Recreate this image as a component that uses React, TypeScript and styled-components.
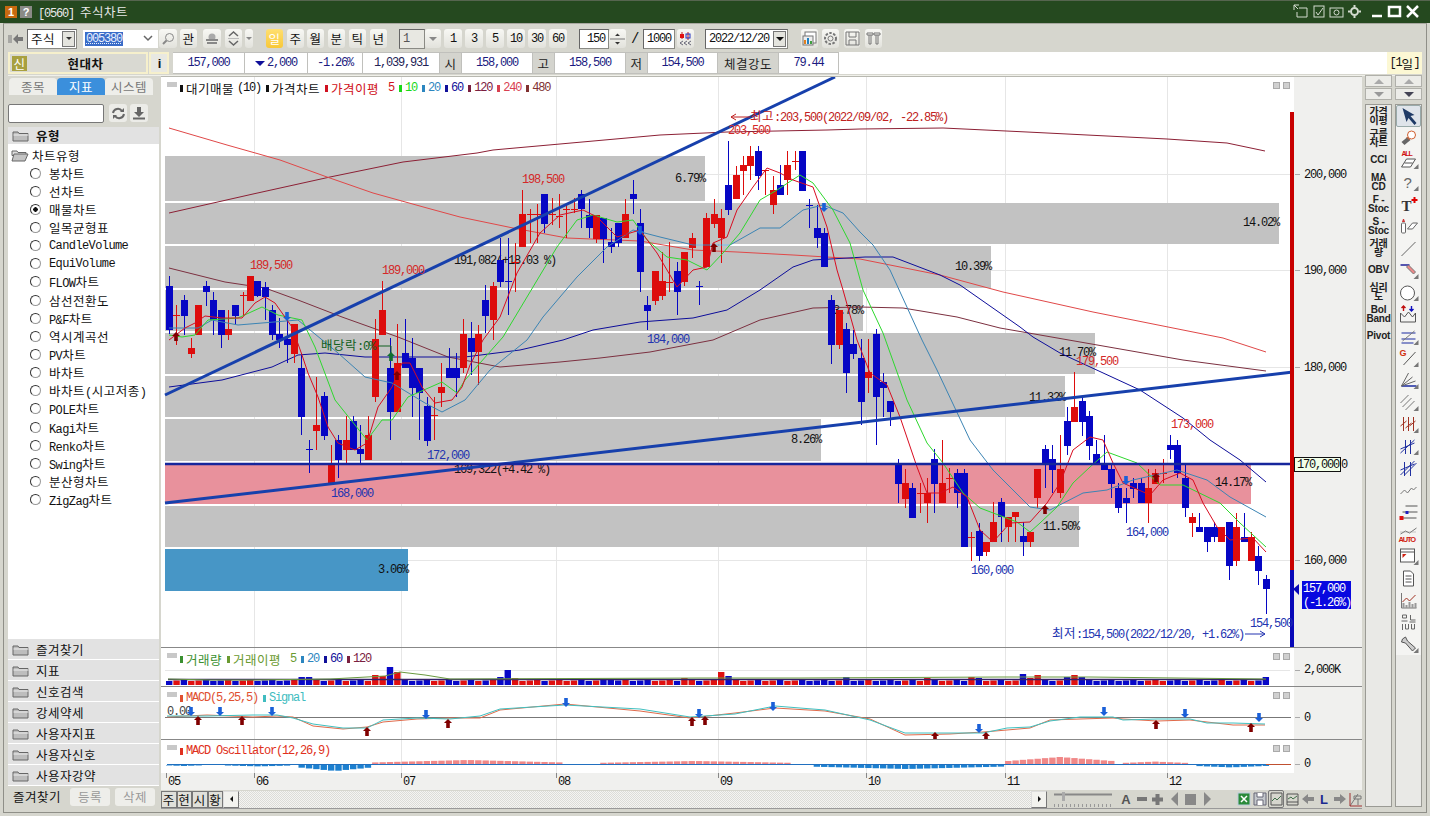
import React from 'react'
import styled, { createGlobalStyle } from 'styled-components'

const GlobalStyle = createGlobalStyle`
  html, body { margin: 0; padding: 0; width: 1430px; height: 816px; overflow: hidden; background: #d6d6ce; }
  * { box-sizing: border-box; }
`

// candles: [colour, body top, body bottom, wick top, wick bottom] in page pixels
type Candle = [string, number, number, number, number]
const candles: Candle[] = [
  ['b', 286, 330, 276, 334], ['r', 315, 315, 305, 345], ['b', 300, 316, 295, 335], ['r', 348, 354, 338, 358],
  ['r', 305, 335, 305, 335], ['b', 286, 292, 281, 306], ['b', 300, 320, 292, 335], ['b', 310, 335, 310, 348],
  ['r', 329, 335, 310, 340], ['b', 305, 316, 305, 325], ['r', 295, 295, 292, 316], ['r', 276, 301, 276, 301],
  ['b', 281, 296, 281, 297], ['b', 287, 297, 282, 320], ['b', 310, 335, 305, 340], ['b', 334, 340, 318, 348],
  ['b', 339, 345, 312, 363], ['r', 324, 354, 324, 363], ['b', 368, 417, 355, 435], ['b', 449, 449, 440, 473],
  ['r', 425, 431, 377, 450], ['b', 396, 436, 392, 440], ['r', 464, 483, 445, 483], ['b', 440, 460, 435, 478],
  ['r', 440, 450, 416, 463], ['b', 421, 450, 416, 450], ['b', 449, 454, 425, 463], ['r', 435, 460, 416, 460],
  ['r', 339, 397, 319, 402], ['r', 310, 335, 281, 335], ['b', 368, 412, 338, 440], ['r', 363, 412, 324, 412],
  ['b', 353, 368, 319, 368], ['b', 358, 388, 338, 417], ['b', 368, 393, 368, 440], ['b', 406, 441, 397, 446],
  ['r', 415, 415, 397, 440], ['r', 387, 393, 363, 407], ['b', 368, 378, 348, 378], ['b', 368, 378, 353, 397],
  ['r', 334, 368, 319, 373], ['b', 338, 352, 322, 375], ['r', 334, 352, 325, 385], ['b', 300, 316, 285, 333],
  ['r', 286, 320, 282, 340], ['b', 260, 282, 238, 287], ['b', 281, 281, 238, 315], ['r', 262, 262, 243, 292],
  ['r', 214, 247, 190, 247], ['r', 214, 214, 209, 243], ['r', 214, 214, 204, 243], ['b', 194, 224, 194, 233],
  ['r', 214, 214, 198, 225], ['r', 216, 216, 194, 228], ['r', 209, 209, 204, 238], ['r', 209, 209, 198, 213],
  ['b', 194, 209, 190, 228], ['b', 215, 228, 199, 238], ['r', 215, 239, 215, 243], ['b', 218, 239, 218, 263],
  ['b', 242, 247, 228, 253], ['b', 223, 243, 223, 247], ['r', 214, 238, 199, 238], ['b', 194, 199, 180, 214],
  ['b', 223, 272, 209, 292], ['b', 305, 311, 296, 330], ['r', 271, 301, 271, 305], ['r', 281, 296, 252, 300],
  ['r', 282, 282, 242, 292], ['b', 271, 292, 262, 315], ['r', 252, 282, 252, 286], ['r', 238, 248, 233, 258],
  ['b', 286, 286, 281, 305], ['r', 218, 267, 213, 267], ['r', 214, 224, 199, 228], ['r', 218, 238, 209, 263],
  ['b', 185, 210, 141, 215], ['r', 175, 199, 166, 199], ['r', 165, 171, 156, 195], ['r', 156, 166, 146, 180],
  ['b', 151, 176, 146, 190], ['r', 170, 170, 170, 195], ['r', 190, 205, 176, 214], ['b', 185, 195, 165, 195],
  ['r', 165, 180, 151, 195], ['r', 161, 161, 151, 170], ['b', 151, 191, 151, 191], ['b', 205, 205, 199, 228],
  ['b', 228, 238, 205, 248], ['b', 233, 267, 228, 267], ['b', 300, 345, 295, 364], ['r', 310, 345, 310, 349],
  ['b', 329, 373, 323, 393], ['b', 344, 354, 330, 359], ['b', 358, 402, 339, 425], ['r', 372, 378, 339, 393],
  ['b', 334, 397, 329, 445], ['b', 382, 388, 373, 417], ['b', 401, 412, 401, 426], ['b', 464, 484, 459, 503],
  ['r', 483, 499, 469, 508], ['b', 488, 518, 483, 518], ['r', 493, 493, 483, 513], ['r', 493, 503, 478, 523],
  ['b', 459, 484, 449, 513], ['r', 483, 503, 440, 503], ['r', 478, 478, 468, 493], ['b', 473, 493, 469, 508],
  ['b', 473, 547, 469, 547], ['r', 537, 537, 532, 561], ['b', 531, 556, 523, 561], ['r', 542, 552, 542, 556],
  ['r', 522, 542, 502, 542], ['b', 502, 517, 498, 542], ['r', 517, 527, 517, 542], ['r', 512, 517, 512, 542],
  ['b', 536, 542, 522, 556], ['r', 532, 542, 532, 547], ['r', 469, 498, 469, 508], ['b', 449, 463, 445, 488],
  ['b', 459, 470, 445, 493], ['r', 469, 493, 435, 498], ['b', 421, 446, 407, 455], ['r', 407, 422, 372, 422],
  ['b', 401, 422, 397, 436], ['b', 416, 446, 411, 460], ['b', 454, 464, 440, 464], ['b', 464, 470, 435, 470],
  ['b', 469, 484, 464, 498], ['b', 488, 508, 483, 513], ['b', 498, 503, 488, 523], ['b', 483, 489, 478, 498],
  ['b', 483, 503, 478, 503], ['r', 488, 503, 469, 523], ['r', 473, 484, 469, 484], ['r', 473, 473, 459, 483],
  ['b', 445, 450, 435, 459], ['b', 445, 473, 440, 478], ['b', 478, 508, 464, 517], ['r', 517, 523, 513, 537],
  ['b', 527, 532, 513, 532], ['b', 527, 542, 527, 552], ['b', 527, 537, 522, 542], ['r', 527, 542, 527, 542],
  ['b', 522, 566, 522, 580], ['r', 527, 561, 513, 566], ['b', 537, 542, 513, 542], ['r', 537, 561, 532, 561],
  ['b', 556, 571, 546, 585], ['b', 579, 589, 575, 614],
]
const candleX = (i: number) => Math.round(169 + 7.36 * i)

const ma5 = '169,340 185,328 195,323 205,316 222,318 242,318 255,303 265,297 275,303 292,327 302,355 308,373 318,397 328,427 338,443 355,450 367,443 378,407 392,387 402,363 410,363 422,387 435,403 452,400 462,387 470,365 483,340 500,317 517,273 540,233 560,215 583,210 597,217 617,237 640,230 657,253 677,287 693,270 707,267 713,243 727,237 737,210 753,187 767,168 780,173 793,180 813,187 827,227 837,270 843,290 857,340 870,373 887,385 900,417 917,467 927,493 940,493 953,487 967,497 980,530 993,542 1010,523 1030,522 1047,503 1060,483 1073,450 1090,437 1103,440 1113,463 1123,483 1150,495 1163,480 1180,473 1193,480 1203,503 1217,527 1230,540 1253,538 1266,552'
const ma10 = '169,335 182,337 195,335 208,320 238,318 262,307 278,315 302,320 315,347 335,400 367,440 382,420 392,420 408,397 442,382 457,393 465,380 503,337 527,297 557,247 577,220 593,215 617,222 633,220 647,240 667,257 687,260 707,270 723,253 740,233 760,200 777,190 800,175 813,183 833,210 850,243 863,290 883,333 907,400 927,443 943,463 963,493 980,508 1017,522 1030,532 1040,523 1057,507 1073,483 1090,467 1107,452 1137,463 1160,485 1183,485 1220,503 1240,523 1266,547'
const ma20 = '169,328 198,328 212,320 238,325 298,320 338,353 365,377 392,383 425,403 442,412 465,400 490,370 527,340 543,317 577,277 607,247 633,230 660,237 693,245 730,245 760,228 780,228 803,210 823,205 843,213 860,232 873,245 890,270 922,340 937,370 970,440 993,470 1030,507 1050,510 1083,493 1107,490 1133,480 1177,470 1207,480 1230,497 1266,517'
const ma60 = '169,387 222,380 272,367 298,355 325,353 365,357 465,357 520,350 563,340 593,330 640,322 693,318 727,310 760,290 793,267 813,260 865,257 893,257 940,275 960,285 1020,327 1033,337 1060,353 1075,360 1140,390 1183,418 1210,440 1240,460 1266,482'
const ma120 = '169,268 225,282 265,288 298,300 342,317 398,337 448,357 500,367 560,362 600,358 650,352 713,340 760,320 813,308 860,307 903,308 957,317 1000,328 1063,339 1183,360 1266,371'
const ma240 = '169,128 227,145 280,160 327,177 373,193 427,208 460,217 513,228 567,238 640,241 693,250 737,252 793,255 860,259 940,275 1003,292 1093,312 1223,338 1266,352'
const ma480 = '169,213 253,194 330,177 403,162 477,153 493,150 560,144 660,135 727,132 827,130 860,129 943,128 1027,132 1167,139 1227,143 1265,151'

const zones = [
  { y: 156, h: 45, x2: 705, label: '6.79%', ly: 178 },
  { y: 203, h: 41, x2: 1279, label: '14.02%', ly: 222 },
  { y: 246, h: 42, x2: 991, label: '10.39%', ly: 266 },
  { y: 290, h: 41, x2: 863, label: '3.78%', ly: 310 },
  { y: 333, h: 41, x2: 1095, label: '11.70%', ly: 352 },
  { y: 376, h: 41, x2: 1065, label: '11.32%', ly: 397 },
  { y: 419, h: 42, x2: 821, label: '8.26%', ly: 439 },
  { y: 463, h: 41, x2: 1251, label: '14.17%', ly: 482, fill: '#e8919c' },
  { y: 506, h: 41, x2: 1079, label: '11.50%', ly: 526 },
  { y: 549, h: 42, x2: 408, label: '3.06%', ly: 569, fill: '#4796c6' },
]

const gridX = [254, 401, 556, 718, 866, 1005, 1167]
const gridY = [174, 270, 367, 464, 560]

const volHeights: Record<number, number> = {
  28: 10, 29: 9, 30: 18, 31: 13, 18: 8, 19: 8, 20: 6, 45: 8, 46: 15, 47: 7, 60: 6, 70: 7, 75: 13, 76: 9, 92: 8, 109: 8, 110: 7, 116: 11, 117: 7, 118: 10, 122: 8, 123: 10, 124: 8, 149: 8, 103: 7,
}

const macdPts = [[167, 716], [207, 716], [253, 715], [277, 715], [293, 718], [313, 724], [343, 728], [367, 728], [383, 720], [417, 718], [450, 719], [480, 716], [500, 709], [565, 705], [640, 709], [690, 717], [735, 714], [775, 706], [825, 710], [870, 720], [905, 733], [950, 733], [983, 733], [1007, 728], [1030, 727], [1050, 721], [1080, 717], [1113, 717], [1123, 720], [1157, 719], [1190, 719], [1207, 723], [1233, 723], [1265, 724]]
const toPts = (p: number[][]) => p.map(([x, y]) => `${x},${y}`).join(' ')
const macdLine = macdPts.map(([x, y], i) => [x, y + (i % 3 === 0 ? 1 : i % 3 === 1 ? -1 : 2)])

const oscValue = (i: number) => {
  const x = candleX(i)
  const bump = (a: number, b: number, h: number) => (x >= a && x <= b ? h * (1 - Math.abs((x - (a + b) / 2) / ((b - a) / 2)) * 0.6) : 0)
  return bump(375, 560, 4) + bump(600, 790, 3) + bump(1005, 1115, 7) + bump(1120, 1190, 2.4) - bump(298, 372, 6) - bump(810, 1003, 4) - bump(1195, 1266, 2.4) - bump(167, 200, 1) - bump(228, 290, 1.4)
}

const upArrows = [[198, 721], [242, 721], [367, 732], [448, 724], [692, 722], [705, 721], [935, 737], [986, 737], [1156, 725], [1251, 728]]
const downArrows = [[191, 711], [220, 711], [272, 711], [426, 714], [566, 702], [699, 713], [773, 706], [979, 728], [1104, 711], [1185, 713], [1259, 717]]

const Han = styled.span`
  font-family: 'Noto Sans CJK KR', sans-serif;
  font-size: 12.5px;
  letter-spacing: 0.5px;
`
const HanT = styled.tspan`
  font-family: 'Noto Sans CJK KR', sans-serif;
  font-size: 12.5px;
  letter-spacing: 0.5px;
`
const splitText = (text: string) => text.split(/([\u3131-\uD7A3]+)/).filter(Boolean)
const isHan = (s: string) => /[\u3131-\uD7A3]/.test(s)

const G: React.FC<{ children: string }> = ({ children }) => (
  <>
    {splitText(children).map((s, i) => (isHan(s) ? <Han key={i}>{s}</Han> : <React.Fragment key={i}>{s}</React.Fragment>))}
  </>
)

const ChartText = styled.text`
  font-family: 'Liberation Mono', monospace;
  font-size: 12px;
  letter-spacing: -1.2px;
`
const Label: React.FC<{ x: number; y: number; fill?: string; anchor?: 'start' | 'end'; children: string }> = ({ x, y, fill = '#111', anchor = 'start', children }) => (
  <ChartText x={x} y={y + 4} fill={fill} textAnchor={anchor}>
    {splitText(children).map((s, i) => (isHan(s) ? <HanT key={i}>{s}</HanT> : <tspan key={i}>{s}</tspan>))}
  </ChartText>
)

const UpArrow: React.FC<{ x: number; y: number; fill?: string }> = ({ x, y, fill = '#800000' }) => (
  <path d={`M${x} ${y - 5}l4 4h-2.2v5h-3.6v-5h-2.2z`} fill={fill} />
)
const DownArrow: React.FC<{ x: number; y: number; fill?: string }> = ({ x, y, fill = '#1a5fd8' }) => (
  <path d={`M${x} ${y + 5}l-4 -4h2.2v-5h3.6v5h2.2z`} fill={fill} />
)

const Window = styled.div`
  width: 1430px;
  height: 816px;
  display: flex;
  flex-direction: column;
  font-family: 'Liberation Mono', monospace;
  font-size: 12px;
  letter-spacing: -1.2px;
  color: #111;
  background: #d6d6ce;
`
const TitleBar = styled.div`
  height: 23px;
  flex: none;
  display: flex;
  align-items: center;
  padding: 0 10px 1px 5px;
  background: #25491f;
  border-top: 1px solid #56654f;
  color: #e8e8e8;
`
const TitleBadge = styled.span<{ $bg: string }>`
  width: 12px;
  height: 12px;
  margin-right: 3px;
  background: ${(p) => p.$bg};
  color: #fff;
  font-family: 'Liberation Sans', sans-serif;
  font-size: 11px;
  font-weight: 700;
  letter-spacing: 0;
  line-height: 12px;
  text-align: center;
`
const TitleText = styled.span`
  margin-left: 3px;
  flex: 1;
`
const TitleIcons = styled.div`
  display: flex;
  align-items: center;
  gap: 3px;
`
const TitleSpacer = styled.span`
  width: 1px;
`
const Frame = styled.div`
  flex: 1;
  margin: 0 3px 3px;
  padding: 0 4px;
  border: 1px solid #8f8f88;
  border-top: 1px solid #a8a8a0;
  display: flex;
  flex-direction: column;
  min-height: 0;
`
const Toolbar = styled.div`
  height: 27px;
  flex: none;
  display: flex;
  align-items: center;
  padding-top: 2px;
`
const Btn = styled.div<{ $w: number; $ml?: number; $active?: boolean; $flat?: boolean }>`
  width: ${(p) => p.$w}px;
  height: 19px;
  margin-left: ${(p) => p.$ml || 0}px;
  flex: none;
  display: flex;
  align-items: center;
  justify-content: center;
  border-radius: 3px;
  background: ${(p) => (p.$flat ? 'none' : p.$active ? 'linear-gradient(#ffdf70, #f8c838)' : 'linear-gradient(#f8f8f4, #e2e2dc)')};
  color: ${(p) => (p.$active ? '#fff' : '#111')};
`
const Field = styled.div<{ $w: number; $ml?: number; $end?: boolean; $off?: boolean }>`
  width: ${(p) => p.$w}px;
  height: 20px;
  margin-left: ${(p) => p.$ml || 0}px;
  flex: none;
  display: flex;
  align-items: center;
  justify-content: ${(p) => (p.$end ? 'flex-end' : 'flex-start')};
  padding: 0 3px;
  background: ${(p) => (p.$off ? '#e8e8e2' : '#fff')};
  color: ${(p) => (p.$off ? '#555' : '#111')};
  border: 1px solid #8a8a84;
  border-top-color: #666;
  border-left-color: #666;
`
const CodeField = styled(Field)`
  border-color: #d6d6ce;
  padding-left: 2px;
`
const Selected = styled.span`
  background: #3a6cc8;
  color: #e8f0ff;
  padding: 0 1px;
  text-decoration: underline dotted;
`
const CodeChevron = styled.svg`
  margin-left: auto;
  margin-right: 2px;
`
const ComboArrow = styled.span`
  width: 13px;
  height: 16px;
  margin-left: auto;
  margin-right: -2px;
  display: flex;
  align-items: center;
  justify-content: center;
  background: #e4e4de;
  border: 1px solid #777;
`
const Slash = styled.span`
  width: 17px;
  flex: none;
  text-align: center;
  font-size: 14px;
`
const InfoRow = styled.div`
  height: 24px;
  flex: none;
  display: flex;
  align-items: stretch;
  padding: 1px 0 1px;
`
const NameBox = styled.div`
  width: 140px;
  flex: none;
  display: flex;
  align-items: center;
  padding: 0 2px;
  background: #d9d9d2;
  border: 2px solid #f6f0cc;
  position: relative;
`
const NewBadge = styled.span`
  width: 15px;
  height: 15px;
  display: flex;
  align-items: center;
  justify-content: center;
  background: #a8a040;
  color: #fff;
`
const StockName = styled.span`
  flex: 1;
  text-align: center;
  font-weight: 700;
`
const InfoBtn = styled.div`
  width: 20px;
  flex: none;
  margin-left: 1px;
  display: flex;
  align-items: center;
  justify-content: center;
  background: #e8e8e2;
  border: 2px solid #f6f0cc;
  font-family: 'Liberation Sans', sans-serif;
  font-weight: 700;
  font-size: 13px;
`
const InfoStrip = styled.div`
  flex: 1;
  margin-left: 4px;
  display: flex;
  background: #fff;
`
const Cell = styled.div<{ $w: number; $label?: boolean; $color?: string }>`
  width: ${(p) => p.$w}px;
  flex: none;
  display: flex;
  align-items: center;
  justify-content: center;
  gap: 2px;
  background: ${(p) => (p.$label ? '#d4d4ce' : '#fff')};
  border: 1px solid #c0c0bc;
  border-left: none;
  color: ${(p) => p.$color || (p.$label ? '#222' : '#1a1a80')};
`
const PeriodCell = styled.div`
  margin-left: auto;
  width: 35px;
  display: flex;
  align-items: center;
  justify-content: center;
  background: #fcf8d4;
`
const Workspace = styled.div`
  flex: 1;
  min-height: 0;
  display: flex;
  padding-bottom: 5px;
  border-top: 1px solid #f0f0ea;
`
const LeftPanel = styled.div`
  width: 151px;
  flex: none;
  margin-right: 1px;
  display: flex;
  flex-direction: column;
`
const Tabs = styled.div`
  display: flex;
  height: 17px;
  margin: 2px 0 8px 1px;
`
const Tab = styled.div<{ $active?: boolean }>`
  width: 48px;
  display: flex;
  align-items: center;
  justify-content: center;
  border-radius: 4px 4px 0 0;
  background: ${(p) => (p.$active ? '#3b8fdc' : '#eeeeea')};
  color: ${(p) => (p.$active ? '#fff' : '#777')};
`
const SearchRow = styled.div`
  display: flex;
  align-items: center;
  height: 20px;
  margin-bottom: 4px;
`
const SearchInput = styled.div`
  width: 96px;
  height: 19px;
  background: #fff;
  border: 1px solid #777;
  border-radius: 2px;
`
const SquareBtn = styled.div<{ $ml: number }>`
  width: 18px;
  height: 18px;
  margin-left: ${(p) => p.$ml}px;
  display: flex;
  align-items: center;
  justify-content: center;
  border-radius: 3px;
  background: #ecece8;
`
const TreeBox = styled.div`
  flex: 1;
  background: #fff;
  display: flex;
  flex-direction: column;
`
const FolderRow = styled.div<{ $h?: number }>`
  height: ${(p) => p.$h || 21}px;
  flex: none;
  display: flex;
  align-items: center;
  gap: 6px;
  padding-left: 4px;
  background: #e2e2e2;
  border-bottom: 1px solid #fff;
`
const SubHead = styled.div`
  height: 18px;
  margin-top: 1px;
  display: flex;
  align-items: center;
  gap: 3px;
  padding-left: 3px;
`
const RadioRow = styled.div`
  height: 18.15px;
  display: flex;
  align-items: center;
  padding-left: 22px;
  gap: 8px;
  letter-spacing: -0.6px;
`
const Radio = styled.span<{ $on?: boolean }>`
  width: 11px;
  height: 11px;
  border-radius: 50%;
  border: 1.5px solid #333;
  border-right-color: #999;
  border-bottom-color: #999;
  background: ${(p) => (p.$on ? 'radial-gradient(circle, #111 0 2px, #fff 2.5px)' : '#fff')};
`
const Accordion = styled.div`
  margin-top: auto;
`
const BottomRow = styled.div`
  height: 21px;
  display: flex;
  align-items: center;
  padding-left: 5px;
`
const GhostBtn = styled.div<{ $ml: number }>`
  width: 40px;
  height: 18px;
  margin-left: ${(p) => p.$ml}px;
  display: flex;
  align-items: center;
  justify-content: center;
  background: #eeeeea;
  border-radius: 3px;
  color: #999;
`
const ChartColumn = styled.div`
  width: 1201px;
  flex: none;
  display: flex;
  flex-direction: column;
  margin-left: 1px;
`
const Pane = styled.div<{ $h: number; $line?: boolean }>`
  height: ${(p) => p.$h}px;
  flex: none;
  display: flex;
  border-top: 1px solid ${(p) => (p.$line ? '#888' : '#b8b8b0')};
  position: relative;
  background: #f0f0ee;
`
const Plot = styled.svg`
  display: block;
  flex: none;
  background: #fff;
`
const AxisSvg = styled.svg`
  display: block;
  flex: none;
`
const Legend = styled.div`
  position: absolute;
  left: 19px;
  top: 4px;
  display: flex;
  align-items: center;
  gap: 5px;
  height: 14px;
`
const LegendItem = styled.span<{ $color: string }>`
  display: flex;
  align-items: center;
  gap: 3px;
  color: ${(p) => p.$color};
  white-space: pre;
  &::before {
    content: '';
    width: 3px;
    height: 7px;
    background: ${(p) => p.$color};
  }
`
const PaneGrip = styled.span`
  position: absolute;
  left: 6px;
  top: 5px;
  width: 10px;
  height: 5px;
  background: #c8c8c8;
`
const PaneButtons = styled.div`
  position: absolute;
  left: 1112px;
  top: 5px;
  display: flex;
  gap: 3px;
`
const PaneButton = styled.span`
  width: 7px;
  height: 7px;
  background: #d0d0d0;
  border: 1px solid #aaa;
`
const XAxis = styled.svg`
  display: block;
  flex: none;
  background: #f0f0ee;
`
const ScrollRow = styled.div`
  height: 19px;
  flex: none;
  display: flex;
  align-items: center;
  border-bottom: 1px solid #999;
`
const SheetTab = styled.div`
  width: 15.5px;
  height: 17px;
  flex: none;
  display: flex;
  align-items: center;
  justify-content: center;
  background: #e0e0da;
  border: 1px solid #777;
`
const SheetArrow = styled.div`
  width: 16px;
  height: 17px;
  flex: none;
  display: flex;
  align-items: center;
  justify-content: center;
  background: #f2f2ee;
  border: 1px solid #777;
  border-top-color: #ddd;
  border-left-color: #ddd;
`
const Track = styled.div`
  width: 792px;
  height: 17px;
  flex: none;
  background: repeating-conic-gradient(#f4f4f2 0 25%, #dcdcd8 0 50%) 0 0 / 2px 2px;
`
const SliderBox = styled.svg`
  margin-left: 5px;
  flex: none;
`
const IconStrip = styled.div`
  margin-left: 3px;
  display: flex;
  align-items: center;
  height: 18px;
`
const StripIcon = styled.span<{ $w: number; $sel?: boolean; $grey?: boolean; $ml?: number }>`
  width: ${(p) => p.$w}px;
  height: 18px;
  margin-left: ${(p) => p.$ml || 0}px;
  display: flex;
  align-items: center;
  justify-content: center;
  border: ${(p) => (p.$sel ? '1px solid #777' : 'none')};
  border-radius: 2px;
  color: ${(p) => (p.$grey ? '#555' : '#1a2a90')};
  font-family: 'Liberation Sans', sans-serif;
  letter-spacing: 0;
  font-size: 13px;
  font-weight: 700;
`
const ToolCols = styled.div`
  display: flex;
  gap: 3px;
  margin-left: 3px;
  margin-top: -1px;
`
const ToolCol = styled.div`
  width: 27px;
  display: flex;
  flex-direction: column;
`
const SpinBtn = styled.div`
  height: 12px;
  margin-bottom: 1px;
  display: flex;
  align-items: center;
  justify-content: center;
  background: #ecece8;
  border: 1px solid #b0b0aa;
`
const SpinStack = styled.div`
  margin-bottom: 3px;
`
const TextTools = styled.div`
  flex: 1;
  background: #e9e9e6;
  border: 1px solid #9a9a94;
  display: flex;
  flex-direction: column;
  padding-top: 0;
`
const TextTool = styled.div`
  height: 22px;
  flex: none;
  display: flex;
  align-items: center;
  justify-content: center;
  text-align: center;
  font-family: 'Liberation Sans', 'Noto Sans CJK KR', sans-serif;
  letter-spacing: -0.2px;
  font-size: 10px;
  font-weight: 700;
  line-height: 9.5px;
  color: #222;
`
const DrawTools = styled.div`
  flex: 1;
  border: 1px solid #9a9a94;
  background: linear-gradient(#f4f4f2 0 550px, #e9e9e6 550px);
  display: flex;
  flex-direction: column;
`
const DrawTool = styled.svg<{ $sel?: boolean }>`
  display: block;
  flex: none;
  border-radius: 2px;
  ${(p) => p.$sel && 'outline: 1px solid #9aa; outline-offset: -1px; background: #dfe4ea;'}
`

const Folder: React.FC = () => (
  <svg width="18" height="13" viewBox="0 0 18 13">
    <path d="M1 3h5l1 1.5h9v7.5H1z" fill="#bdbdbd" stroke="#666" />
    <path d="M1.5 6h15" stroke="#eee" />
  </svg>
)
const OpenFolder: React.FC = () => (
  <svg width="18" height="13" viewBox="0 0 18 13">
    <path d="M1 2h5l1 1.5h8v3H1z" fill="#ddd" stroke="#666" />
    <path d="M1 12l2-7h14l-3 7z" fill="#c4c4c4" stroke="#666" />
  </svg>
)
const Tri: React.FC<{ dir: 'up' | 'down' | 'left' | 'right'; color?: string; s?: number }> = ({ dir, color = '#333', s = 5 }) => {
  const d = { up: `M0 ${s}L${s} 0L${s * 2} ${s}z`, down: `M0 0L${s} ${s}L${s * 2} 0z`, left: `M${s} 0L0 ${s}L${s} ${s * 2}z`, right: `M0 0L${s} ${s}L0 ${s * 2}z` }[dir]
  const horiz = dir === 'up' || dir === 'down'
  return (
    <svg width={horiz ? s * 2 : s} height={horiz ? s : s * 2}>
      <path d={d} fill={color} />
    </svg>
  )
}
const Corner = () => <path d="M22 20h-5l5-5z" fill="#777" />

const radioItems = ['봉차트', '선차트', '매물차트', '일목균형표', 'CandleVolume', 'EquiVolume', 'FLOW차트', '삼선전환도', 'P&F차트', '역시계곡선', 'PV차트', '바차트', '바차트(시고저종)', 'POLE차트', 'Kagi차트', 'Renko차트', 'Swing차트', '분산형차트', 'ZigZag차트']
const folders = ['즐겨찾기', '지표', '신호검색', '강세약세', '사용자지표', '사용자신호', '사용자강약']

const textTools: string[][] = [['가격', '이평'], ['구름', '차트'], ['CCI'], ['MA', 'CD'], ['F -', 'Stoc'], ['S -', 'Stoc'], ['거래', '량'], ['OBV'], ['심리', '도'], ['Bol', 'Band'], ['Pivot']]

const drawIcons: React.ReactNode[] = [
  <path key="a" d="M6 3l12 7-4 1 6 7-2 2-6-7-2 4z" fill="#1f3a66" />,
  <g key="b"><path d="M5 15l6-5 3 3-6 5z" fill="#666" /><circle cx="15" cy="8" r="4" fill="#fff" stroke="#d06030" /><path d="M10 10l3 3" stroke="#d06030" /></g>,
  <g key="c"><text x="5" y="7" fontSize="7" fontWeight="700" fontFamily="Liberation Sans" fill="#d01010">ALL</text><path d="M5 18l5-8h9l-5 8z" fill="#fff" stroke="#555" /><path d="M8 14h8" stroke="#555" /><Corner /></g>,
  <g key="d"><text x="7" y="17" fontSize="15" fontFamily="Liberation Sans" fill="#666">?</text><Corner /></g>,
  <g key="e"><text x="5" y="18" fontSize="15" fontWeight="700" fontFamily="Liberation Serif" fill="#333">T</text><path d="M15 7h6M18 4v6" stroke="#e00000" strokeWidth="2" /></g>,
  <g key="f"><rect x="5" y="8" width="4" height="10" rx="1" fill="#fff" stroke="#666" /><path d="M6 7l1-3 1 3" fill="#c33" stroke="#c33" /><path d="M11 14l5-6h5l-5 6z" fill="#fff" stroke="#666" /></g>,
  <path key="g" d="M5 19L19 5" stroke="#666" />,
  <g key="h"><path d="M4 6h9" stroke="#20209a" strokeWidth="1.5" /><path d="M10 8l7 7 2-2-7-7z" fill="#e88" stroke="#777" /><Corner /></g>,
  <g key="i"><circle cx="11" cy="12" r="7" fill="#fff" stroke="#555" /><Corner /></g>,
  <g key="j"><path d="M4 19V10l4 4 4-5 4 5 3-4v9z" fill="none" stroke="#555" /><path d="M7 3v5M5 5l2-2 2 2" stroke="#c01010" strokeWidth="1.4" fill="none" /><path d="M15 3v5M13 6l2 2 2-2" stroke="#1010c0" strokeWidth="1.4" fill="none" /></g>,
  <g key="k"><path d="M5 8h14M5 14h14" stroke="#1a2aa0" /><path d="M6 16L18 6" stroke="#777" /><path d="M5 18h12" stroke="#1a2aa0" /><Corner /></g>,
  <g key="l"><text x="3" y="9" fontSize="9" fontWeight="700" fontFamily="Liberation Sans" fill="#d03010">G</text><path d="M7 18L19 5" stroke="#555" /><Corner /></g>,
  <g key="m"><path d="M5 17h15" stroke="#1a2aa0" strokeWidth="1.5" /><path d="M5 17L12 4M5 17l11-9M5 17l14-5" stroke="#666" /><Corner /></g>,
  <g key="n"><path d="M4 12l8-8M6 16l9-9M9 19l9-9" stroke="#777" /><Corner /></g>,
  <g key="o"><path d="M7 4v14M12 4v14M17 4v14" stroke="#a03020" /><path d="M4 13l6-5M9 15l6-5M13 13l6-5" stroke="#a03020" /><Corner /></g>,
  <g key="p"><path d="M4 18L18 5M9 5v14M14 5v14" stroke="#2030a0" /><path d="M4 14l14-6" stroke="#2030a0" /><Corner /></g>,
  <g key="q"><path d="M4 18L18 4M8 18L20 6M4 13l14-6M8 5v14M14 5v14" stroke="#2030a0" /></g>,
  <path key="r" d="M4 15l4-4 3 3 4-5 2 2 3-3" fill="none" stroke="#777" />,
  <g key="s"><path d="M9 5h12M6 11h15M4 17h16" stroke="#555" /><rect x="3" y="15" width="4" height="4" fill="#e01010" /><rect x="9" y="10" width="3" height="3" fill="#2020c0" /></g>,
  <g key="t"><path d="M4 11l5-3 4 2 7-5" fill="none" stroke="#777" /><path d="M4 9h16" stroke="#999" strokeDasharray="1 1" /><text x="2" y="19" fontSize="7.5" fontWeight="700" fontFamily="Liberation Sans" fill="#d02010">AUTO</text></g>,
  <g key="u"><rect x="4" y="4" width="14" height="13" fill="#fff" stroke="#555" /><path d="M4 7h14" stroke="#555" /><path d="M6 9h4l-4 4z" fill="#d02010" /><Corner /></g>,
  <g key="v"><path d="M7 4h7l3 3v12H7z" fill="#fff" stroke="#555" /><path d="M9 9h6M9 12h6M9 15h6" stroke="#555" /></g>,
  <g key="w"><path d="M5 4v15h15" fill="none" stroke="#777" /><path d="M7 19v-5M10 19v-3M13 19v-6M16 19v-4M19 19v-5" stroke="#999" strokeWidth="2" /><path d="M6 13l4-4 3 3 6-6" fill="none" stroke="#a03020" /></g>,
  <g key="x"><path d="M6 4h4v3H6zM5 10h6M14 4v5h5M13 11h6M6 13v6M9 13v5h3v-5M15 13v5h3v-5" fill="none" stroke="#666" /></g>,
  <g key="y"><path d="M6 6l3-2 2 4 8 7-3 3-7-8-4-1z" fill="#ccc" stroke="#555" /><Corner /></g>,
]

const TitleIcon: React.FC<{ w?: number; children: React.ReactNode }> = ({ w = 15, children }) => (
  <svg width={w} height="15" viewBox={`0 0 ${w} 15`} fill="none" stroke="#d4dcd0">
    {children}
  </svg>
)

const Panes = () => (
  <>
    <Pane $h={571}>
      <Plot width={1133} height={570} viewBox="161 77 1133 570">
        {gridX.map((x) => <path key={x} d={`M${x + 0.5} 77V647`} stroke="#e6e6e6" />)}
        {gridY.map((y) => <path key={y} d={`M165 ${y + 0.5}H1290`} stroke="#e6e6e6" />)}
        {zones.map((z) => <rect key={z.y} x={165} y={z.y} width={z.x2 - 165} height={z.h} fill={z.fill || '#c2c2c2'} />)}
        {zones.map((z) => <Label key={z.y} x={z.x2} y={z.ly} anchor="end">{z.label}</Label>)}
        <polyline points={ma480} fill="none" stroke="#8c2035" />
        <polyline points={ma240} fill="none" stroke="#e04848" />
        <polyline points={ma120} fill="none" stroke="#7c3040" />
        <polyline points={ma60} fill="none" stroke="#0d0d9a" />
        <Label x={454} y={260}>191,082(+18.03 %)</Label>
        <Label x={454} y={469}>169,322(+4.42 %)</Label>
        {candles.map(([c, top, bottom, wt, wb], i) => {
          const x = candleX(i)
          const color = c === 'r' ? '#dd0c0c' : '#0606c4'
          return (
            <g key={i}>
              <path d={`M${x + 0.5} ${wt}V${wb}`} stroke={color} />
              {top === bottom ? <path d={`M${x - 3} ${top + 0.5}h7`} stroke={color} /> : <rect x={x - 3} y={top} width={7} height={bottom - top} fill={color} />}
            </g>
          )
        })}
        <polyline points={ma20} fill="none" stroke="#3b84b4" />
        <polyline points={ma10} fill="none" stroke="#2ed82e" />
        <polyline points={ma5} fill="none" stroke="#d80c20" />
        <path d="M165 395L835 77" stroke="#1740ac" strokeWidth="3" />
        <path d="M165 503L1293 372" stroke="#1740ac" strokeWidth="3" />
        <path d="M165 464H1290" stroke="#16269c" strokeWidth="2.5" />
        <rect x={1290} y={112} width={4} height={458} fill="#c80000" />
        <rect x={1290} y={570} width={4} height={77} fill="#0808b8" />
        <Label x={250} y={265} fill="#d42828">189,500</Label>
        <Label x={382} y={270} fill="#d42828">189,000</Label>
        <Label x={522} y={179} fill="#d42828">198,500</Label>
        <Label x={728} y={130} fill="#d42828">203,500</Label>
        <path d="M731 117h19M731 117l5-3M731 117l5 3" stroke="#c02020" fill="none" />
        <Label x={750} y={117} fill="#c02020">최고:203,500(2022/09/02, -22.85%)</Label>
        <Label x={1076} y={361} fill="#d42828">179,500</Label>
        <Label x={1171} y={424} fill="#d42828">173,000</Label>
        <Label x={647} y={339} fill="#2233b0">184,000</Label>
        <Label x={427} y={455} fill="#2233b0">172,000</Label>
        <Label x={331} y={493} fill="#2233b0">168,000</Label>
        <Label x={971} y={570} fill="#2233b0">160,000</Label>
        <Label x={1126} y={532} fill="#2233b0">164,000</Label>
        <Label x={1250} y={623} fill="#2233b0">154,500</Label>
        <Label x={1052} y={634} fill="#2233b0">최저:154,500(2022/12/20, +1.62%)</Label>
        <path d="M1245 634h20M1265 634l-5-3M1265 634l-5 3" stroke="#2233b0" fill="none" />
        <Label x={321} y={346} fill="#106020">배당락:0%</Label>
        <path d="M378 346h13v8" stroke="#106020" fill="none" />
        <UpArrow x={391} y={357} fill="#107030" />
        <UpArrow x={176} y={337} />
        <DownArrow x={287} y={316} />
        <DownArrow x={640} y={230} />
        <DownArrow x={824} y={207} />
        <DownArrow x={1126} y={480} />
        <UpArrow x={714} y={248} />
        <UpArrow x={1045} y={510} />
        <UpArrow x={397} y={376} />
        <UpArrow x={1156} y={478} />
      </Plot>
      <AxisSvg width={68} height={570} viewBox="1294 77 68 570">
        {[['200,000', 174], ['190,000', 270], ['180,000', 367], ['160,000', 560]].map(([t, y]) => (
          <g key={t}>
            <path d={`M1295 ${Number(y) + 0.5}h5`} stroke="#aaa" />
            <Label x={1304} y={Number(y)}>{String(t)}</Label>
          </g>
        ))}
        <rect x={1294.5} y={457.5} width={46} height={14} fill="#f2ffe8" stroke="#111" />
        <Label x={1297} y={464}>170,000</Label>
        <Label x={1341} y={464}>0</Label>
        <path d="M1293 589l6-5v11z" fill="#0808b8" />
        <rect x={1302} y={581} width={49} height={28} fill="#0808e0" />
        <Label x={1303} y={588} fill="#fff">157,000</Label>
        <Label x={1303} y={602} fill="#fff">(-1.26%)</Label>
      </AxisSvg>
      <PaneGrip />
      <Legend>
        <LegendItem $color="#111"><G>대기매물(10)</G></LegendItem>
        <LegendItem $color="#111"><G>가격차트</G></LegendItem>
        <LegendItem $color="#d01020"><G>가격이평 5</G></LegendItem>
        <LegendItem $color="#18d818">10</LegendItem>
        <LegendItem $color="#2c86c0">20</LegendItem>
        <LegendItem $color="#10109a">60</LegendItem>
        <LegendItem $color="#7a2040">120</LegendItem>
        <LegendItem $color="#d84050">240</LegendItem>
        <LegendItem $color="#803030">480</LegendItem>
      </Legend>
      <PaneButtons><PaneButton /><PaneButton /></PaneButtons>
    </Pane>
    <Pane $h={39} $line>
      <Plot width={1133} height={38} viewBox="161 648 1133 38">
        {gridX.map((x) => <path key={x} d={`M${x + 0.5} 648V686`} stroke="#e6e6e6" />)}
        <path d="M165 670.5H1290" stroke="#e6e6e6" />
        {candles.map(([c], i) => {
          const h = volHeights[i] || 4 + ((i * 7) % 3) * 0.5
          return <rect key={i} x={166 + i * 7.36} y={685 - h} width={6.4} height={h} fill={c === 'r' ? '#e01010' : '#0808c8'} />
        })}
        <path d="M168 679.5H1266" stroke="#35206a" strokeWidth="1.4" />
        <polyline points="168,679 210,680 250,680 330,679 385,676 400,672 425,675 450,679 700,678 800,678 1000,677 1090,677 1266,679" fill="none" stroke="#6a9a40" />
      </Plot>
      <AxisSvg width={68} height={38} viewBox="1294 648 68 38">
        <path d="M1295 670.5h5" stroke="#aaa" />
        <Label x={1304} y={669}>2,000K</Label>
      </AxisSvg>
      <PaneGrip />
      <Legend>
        <LegendItem $color="#3a9030"><G>거래량</G></LegendItem>
        <LegendItem $color="#6a9a30"><G>거래이평 5</G></LegendItem>
        <LegendItem $color="#2c86c0">20</LegendItem>
        <LegendItem $color="#10109a">60</LegendItem>
        <LegendItem $color="#7a2040">120</LegendItem>
      </Legend>
      <PaneButtons><PaneButton /><PaneButton /></PaneButtons>
    </Pane>
    <Pane $h={53} $line>
      <Plot width={1133} height={52} viewBox="161 687 1133 52">
        {gridX.map((x) => <path key={x} d={`M${x + 0.5} 687V739`} stroke="#e6e6e6" />)}
        <path d="M165 717.5H1291" stroke="#777" />
        <Label x={167} y={711} fill="#444">0.00</Label>
        <polyline points={toPts(macdLine)} fill="none" stroke="#e06a4a" />
        <polyline points={toPts(macdPts)} fill="none" stroke="#40c0c0" />
        {upArrows.map(([x, y]) => <UpArrow key={x} x={x} y={y} />)}
        {downArrows.map(([x, y]) => <DownArrow key={x} x={x} y={y} />)}
      </Plot>
      <AxisSvg width={68} height={52} viewBox="1294 687 68 52">
        <path d="M1295 717.5h5" stroke="#aaa" />
        <Label x={1304} y={717}>0</Label>
      </AxisSvg>
      <PaneGrip />
      <Legend>
        <LegendItem $color="#e05030">MACD(5,25,5)</LegendItem>
        <LegendItem $color="#40bcc0">Signal</LegendItem>
      </Legend>
      <PaneButtons><PaneButton /><PaneButton /></PaneButtons>
    </Pane>
    <Pane $h={34} $line>
      <Plot width={1133} height={33} viewBox="161 740 1133 33">
        {gridX.map((x) => <path key={x} d={`M${x + 0.5} 740V773`} stroke="#e6e6e6" />)}
        <path d="M167 764.5H1266" stroke="#2070c0" />
        <path d="M1266 764.5H1291" stroke="#c05030" />
        {candles.map((_, i) => {
          const v = oscValue(i)
          if (Math.abs(v) < 0.4) return null
          return <rect key={i} x={166 + i * 7.36} y={v > 0 ? 764 - v : 765} width={6.4} height={Math.abs(v)} fill={v > 0 ? '#f08888' : '#1c80d0'} />
        })}
      </Plot>
      <AxisSvg width={68} height={33} viewBox="1294 740 68 33">
        <path d="M1295 764.5h5" stroke="#aaa" />
        <Label x={1304} y={763}>0</Label>
      </AxisSvg>
      <PaneGrip />
      <Legend>
        <LegendItem $color="#e03020">MACD Oscillator(12,26,9)</LegendItem>
      </Legend>
      <PaneButtons><PaneButton /><PaneButton /></PaneButtons>
    </Pane>
  </>
)

export default function App() {
  return (
    <Window>
      <GlobalStyle />
      <TitleBar>
        <TitleBadge $bg="#c86a10">1</TitleBadge>
        <TitleBadge $bg="#8a8a86">?</TitleBadge>
        <TitleText><G>[0560] 주식차트</G></TitleText>
        <TitleIcons>
          <TitleIcon><path d="M1 1h5M1 1v5M1 1l4 4M6 4h8v9H4V8" /></TitleIcon>
          <TitleIcon><rect x="3" y="2" width="10" height="11" /><path d="M5 8l2 3 5-7" /></TitleIcon>
          <TitleIcon><rect x="1" y="4" width="13" height="9" /><circle cx="7.5" cy="8.5" r="2.5" /></TitleIcon>
          <TitleIcon><circle cx="7.5" cy="7.5" r="3.5" strokeWidth="2" /><path d="M7.5 1v2M7.5 12v2M1 7.5h2M12 7.5h2" strokeWidth="2" /></TitleIcon>
          <TitleSpacer />
          <TitleIcon><path d="M3 12h10" strokeWidth="2.5" stroke="#fff" /></TitleIcon>
          <TitleIcon><rect x="2" y="3" width="11" height="9" strokeWidth="2.5" stroke="#fff" /></TitleIcon>
          <TitleIcon><path d="M2 2l11 11M13 2L2 13" strokeWidth="2.5" stroke="#fff" /></TitleIcon>
        </TitleIcons>
      </TitleBar>
      <Frame>
        <Toolbar>
          <Btn $w={16} $flat>
            <svg width="16" height="14"><path d="M1 3v8M3 3v8" stroke="#888" strokeWidth="1.2" /><path d="M5 7l5-5v3h5v4h-5v3z" fill="#777" /></svg>
          </Btn>
          <Field $w={50} $ml={3}><G>주식</G><ComboArrow><Tri dir="down" s={3} /></ComboArrow></Field>
          <CodeField $w={77} $ml={5}>
            <Selected>005380</Selected>
            <CodeChevron width="10" height="7"><path d="M1 1l4 4 4-4" stroke="#666" fill="none" strokeWidth="1.5" /></CodeChevron>
          </CodeField>
          <Btn $w={18}><svg width="14" height="14" fill="none" stroke="#888"><circle cx="8.5" cy="5.5" r="4" /><path d="M5.5 8.5L2 12" strokeWidth="2" /></svg></Btn>
          <Btn $w={17} $ml={3}><G>관</G></Btn>
          <Btn $w={18} $ml={6}><svg width="14" height="14"><circle cx="7" cy="5" r="3.5" fill="#aaa" /><path d="M1 8h12M2 11h10" stroke="#888" strokeWidth="2" /></svg></Btn>
          <Btn $w={17} $ml={4}><svg width="11" height="15"><path d="M1 5l4.5-4L10 5M1 10l4.5 4L10 10" fill="none" stroke="#666" strokeWidth="1.5" /><path d="M0 7.5h11" stroke="#bbb" /></svg></Btn>
          <Btn $w={8} $ml={3}><Tri dir="down" s={3} color="#888" /></Btn>
          <Btn $w={17} $ml={13} $active><G>일</G></Btn>
          <Btn $w={17} $ml={4}><G>주</G></Btn>
          <Btn $w={17} $ml={3}><G>월</G></Btn>
          <Btn $w={17} $ml={4}><G>분</G></Btn>
          <Btn $w={17} $ml={4}><G>틱</G></Btn>
          <Btn $w={17} $ml={4}><G>년</G></Btn>
          <Field $w={26} $ml={12} $off>1</Field>
          <Btn $w={16}><Tri dir="down" s={4} color="#888" /></Btn>
          <Btn $w={18} $ml={3}>1</Btn>
          <Btn $w={18} $ml={3}>3</Btn>
          <Btn $w={18} $ml={3}>5</Btn>
          <Btn $w={18} $ml={3}>10</Btn>
          <Btn $w={18} $ml={3}>30</Btn>
          <Btn $w={18} $ml={3}>60</Btn>
          <Field $w={30} $ml={12} $end>150</Field>
          <Btn $w={17}><svg width="15" height="16"><path d="M0 8h15" stroke="#777" /><path d="M5 5l2.5-2.5L10 5zM5 11l2.5 2.5L10 11z" fill="#333" /></svg></Btn>
          <Slash>/</Slash>
          <Field $w={32} $end>1000</Field>
          <Btn $w={17} $ml={2}><svg width="15" height="15"><path d="M4 1v2M4 8v-2M10 1v8" stroke="#c02020" strokeWidth="1" /><rect x="2" y="3" width="4" height="4" fill="#e01010" /><rect x="8" y="3" width="4" height="4" fill="none" stroke="#2030c0" /><path d="M5 10l-3 2 3 2M9 10l-3 2 3 2M13 10l-3 2 3 2" fill="none" stroke="#667" /></svg></Btn>
          <Field $w={83} $ml={11}>2022/12/20<ComboArrow><Tri dir="down" s={4} color="#111" /></ComboArrow></Field>
          <Btn $w={17} $ml={13}><svg width="15" height="15"><rect x="3" y="1" width="11" height="11" fill="#fff" stroke="#777" /><rect x="1" y="5" width="10" height="9" fill="#eee" stroke="#777" /><path d="M3 13V9" stroke="#e08020" strokeWidth="2" /><path d="M6 13V7" stroke="#2080c0" strokeWidth="2" /><path d="M9 13v-3" stroke="#40a040" strokeWidth="2" /></svg></Btn>
          <Btn $w={17} $ml={4}><svg width="15" height="15" fill="none" stroke="#777"><circle cx="7.5" cy="7.5" r="2.5" /><circle cx="7.5" cy="7.5" r="5.5" strokeDasharray="2.5 1.5" strokeWidth="2" /></svg></Btn>
          <Btn $w={16} $ml={5}><svg width="15" height="15" fill="none" stroke="#777"><path d="M1 1h13v13H1zM4 1v5h7V1M4 14V9h7v5" /></svg></Btn>
          <Btn $w={17} $ml={5}><svg width="15" height="15" fill="none" stroke="#777"><path d="M1 2h6v2H1zM8 2h6v2H8zM3 4v9h2V4M10 4v9h2V4" /></svg></Btn>
        </Toolbar>
        <InfoRow>
          <NameBox><NewBadge><G>신</G></NewBadge><StockName><G>현대차</G></StockName></NameBox>
          <InfoBtn>i</InfoBtn>
          <InfoStrip>
            <Cell $w={72}>157,000</Cell>
            <Cell $w={63}><Tri dir="down" s={5} color="#10109a" />2,000</Cell>
            <Cell $w={55}>-1.26%</Cell>
            <Cell $w={77} $color="#222255">1,039,931</Cell>
            <Cell $w={22} $label><G>시</G></Cell>
            <Cell $w={71}>158,000</Cell>
            <Cell $w={22} $label><G>고</G></Cell>
            <Cell $w={71}>158,500</Cell>
            <Cell $w={22} $label><G>저</G></Cell>
            <Cell $w={70}>154,500</Cell>
            <Cell $w={61} $label><G>체결강도</G></Cell>
            <Cell $w={60}>79.44</Cell>
            <PeriodCell><G>[1일]</G></PeriodCell>
          </InfoStrip>
        </InfoRow>
        <Workspace>
          <LeftPanel>
            <Tabs>
              <Tab><G>종목</G></Tab>
              <Tab $active><G>지표</G></Tab>
              <Tab><G>시스템</G></Tab>
            </Tabs>
            <SearchRow>
              <SearchInput />
              <SquareBtn $ml={5}><svg width="15" height="13" fill="none" stroke="#666" strokeWidth="2"><path d="M2 6a5 5 0 0 1 9-2M13 7a5 5 0 0 1-9 2" /><path d="M9 5h4V1z" fill="#666" stroke="none" /><path d="M6 8H2v4z" fill="#666" stroke="none" /></svg></SquareBtn>
              <SquareBtn $ml={3}><svg width="14" height="14"><path d="M5 1h4v5h3l-5 5-5-5h3z" fill="#666" /><path d="M1 12.5h12" stroke="#666" strokeWidth="2" /></svg></SquareBtn>
            </SearchRow>
            <TreeBox>
              <FolderRow $h={18}><Folder /><strong><G>유형</G></strong></FolderRow>
              <SubHead><OpenFolder /><G>차트유형</G></SubHead>
              {radioItems.map((item, i) => (
                <RadioRow key={item}>
                  <Radio $on={i === 2} />
                  <span><G>{item}</G></span>
                </RadioRow>
              ))}
              <Accordion>
                {folders.map((f) => <FolderRow key={f}><Folder /><G>{f}</G></FolderRow>)}
              </Accordion>
            </TreeBox>
            <BottomRow>
              <G>즐겨찾기</G>
              <GhostBtn $ml={9}><G>등록</G></GhostBtn>
              <GhostBtn $ml={5}><G>삭제</G></GhostBtn>
            </BottomRow>
          </LeftPanel>
          <ChartColumn>
            <Panes />
            <XAxis width={1201} height={17} viewBox="161 773 1201 17">
              {[166, ...gridX].map((x, i) => (
                <g key={x}>
                  <path d={`M${x + 0.5} 773v5`} stroke="#888" />
                  <Label x={x + 2} y={781}>{['05', '06', '07', '08', '09', '10', '11', '12'][i]}</Label>
                </g>
              ))}
            </XAxis>
            <ScrollRow>
              <SheetTab><G>주</G></SheetTab>
              <SheetTab><G>현</G></SheetTab>
              <SheetTab><G>시</G></SheetTab>
              <SheetTab><G>황</G></SheetTab>
              <SheetArrow><Tri dir="left" s={3} color="#111" /></SheetArrow>
              <Track />
              <SheetArrow><Tri dir="right" s={3} color="#111" /></SheetArrow>
              <SliderBox width="62" height="16">
                <path d="M2 3.5h58" stroke="#888" strokeWidth="2" />
                <path d="M2 14.5h58" stroke="#999" strokeDasharray="1 3" strokeWidth="3" />
                <rect x="10" y="1" width="3" height="9" fill="#aaa" />
              </SliderBox>
              <IconStrip>
                <StripIcon $w={18} $grey>A</StripIcon>
                <StripIcon $w={14}><svg width="12" height="8"><rect x="1" y="2" width="10" height="4" fill="#777" /></svg></StripIcon>
                <StripIcon $w={17}><svg width="13" height="13"><path d="M4.5 1h4v3.5H12v4H8.5V12h-4V8.5H1v-4h3.5z" fill="#777" /></svg></StripIcon>
                <StripIcon $w={16}><Tri dir="left" s={7} color="#888" /></StripIcon>
                <StripIcon $w={16}><svg width="11" height="11"><rect width="11" height="11" fill="#888" /></svg></StripIcon>
                <StripIcon $w={18}><Tri dir="right" s={7} color="#888" /></StripIcon>
                <StripIcon $w={16} $ml={20}><svg width="14" height="14"><rect x="1" y="1" width="12" height="12" fill="#2a8a3a" stroke="#bcd" /><path d="M4 4l6 6M10 4l-6 6" stroke="#fff" strokeWidth="1.5" /></svg></StripIcon>
                <StripIcon $w={16}><svg width="14" height="14" fill="#c4c8cc" stroke="#667"><path d="M1 1h12v12H1z" /><path d="M4 1v4h6V1M4 13V8h6v5" fill="#fff" /></svg></StripIcon>
                <StripIcon $w={16} $sel><svg width="13" height="14" fill="none" stroke="#555"><path d="M1 1h11v12H1z" /><path d="M2 9l3-3 2 2 4-4" stroke="#40704a" /></svg></StripIcon>
                <StripIcon $w={16}><svg width="13" height="13" fill="none" stroke="#555"><path d="M1 1h11v11H1zM1 9h11" /><path d="M2 6l3-2 2 2 4-3" stroke="#40704a" /></svg></StripIcon>
                <StripIcon $w={16}><svg width="12" height="10"><path d="M6 0v3h6v4H6v3L0 5z" fill="#888" /></svg></StripIcon>
                <StripIcon $w={16}>L</StripIcon>
                <StripIcon $w={16}><svg width="12" height="10"><path d="M6 0v3H0v4h6v3l6-5z" fill="#888" /></svg></StripIcon>
                <StripIcon $w={16}><svg width="14" height="15" fill="none"><path d="M1 14L9 2" stroke="#777" /><path d="M1 1v13h12" stroke="#a03030" /><path d="M5 4h7v3H5zM9 7v6" stroke="#777" /></svg></StripIcon>
              </IconStrip>
            </ScrollRow>
          </ChartColumn>
          <ToolCols>
            <ToolCol>
              <SpinStack>
                <SpinBtn><Tri dir="up" s={5} color="#aaa" /></SpinBtn>
                <SpinBtn><Tri dir="down" s={5} color="#999" /></SpinBtn>
              </SpinStack>
              <TextTools>
                {textTools.map((lines) => (
                  <TextTool key={lines.join()}>
                    <span>{lines[0]}{lines[1] && <br />}{lines[1]}</span>
                  </TextTool>
                ))}
              </TextTools>
            </ToolCol>
            <ToolCol>
              <SpinStack>
                <SpinBtn><Tri dir="up" s={5} color="#aaa" /></SpinBtn>
                <SpinBtn><Tri dir="down" s={5} color="#445" /></SpinBtn>
              </SpinStack>
              <DrawTools>
                {drawIcons.map((icon, i) => (
                  <DrawTool key={i} width={25} height={22} viewBox="0 0 24 22" $sel={i === 0}>
                    {icon}
                  </DrawTool>
                ))}
              </DrawTools>
            </ToolCol>
          </ToolCols>
        </Workspace>
      </Frame>
    </Window>
  )
}
